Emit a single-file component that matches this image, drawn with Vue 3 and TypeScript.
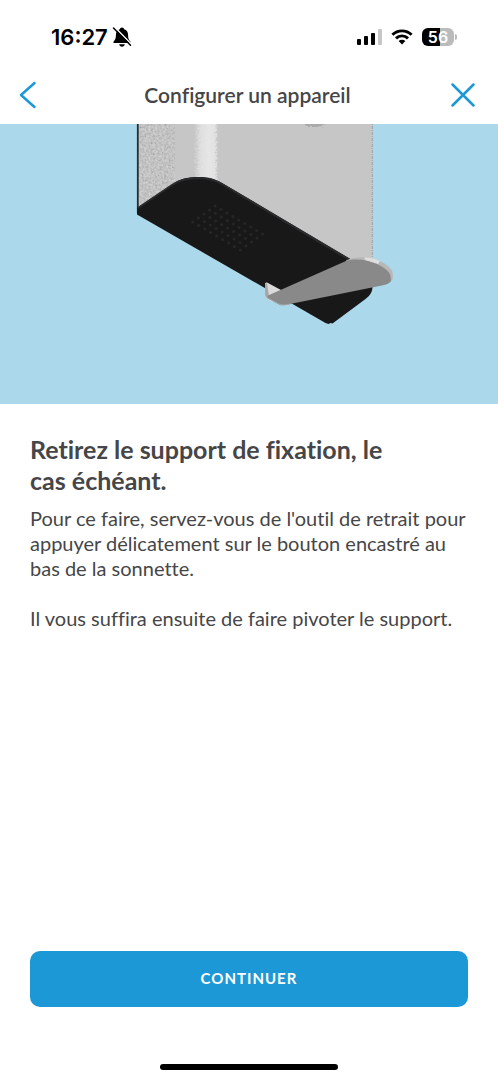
<script setup lang="ts">
interface Dot {
  x: number
  y: number
}

const title = 'Configurer un appareil'
const batteryLevel = 56

const speakerDots: Dot[] = []
for (let row = 0; row < 5; row++) {
  for (let col = 0; col < 9; col++) {
    speakerDots.push({ x: 215 + col * 5.95 - row * 5.55, y: 206 + col * 3.5 + row * 4 })
  }
}
</script>

<template>
  <div class="screen">
    <div class="status">
      <div class="clock">
        <span>16:27</span>
        <svg width="20" height="22" viewBox="0 0 20 22" aria-hidden="true">
          <path d="M10 1.500c1.200 0 2 .8 2.100 1.800 2.600.8 4 2.800 4 5.700 0 3.800.8 4.800 2.100 6.200.8.9.5 1.900-.7 1.900h-15c-1.200 0-1.500-1-.7-1.900C3.100 13.800 3.900 12.800 3.900 9c0-2.900 1.400-4.900 4-5.700C8 2.300 8.800 1.500 10 1.500z" />
          <path d="M7.200 18.300h5.600c-.2 1.500-1.300 2.400-2.800 2.400s-2.600-.9-2.800-2.400z" />
          <path d="M2.800 1.200 19.500 18.200" stroke="#fff" stroke-width="1.500" />
          <path d="M1.500 2 18.500 19.300" stroke="#000" stroke-width="1.500" stroke-linecap="round" />
        </svg>
      </div>
      <div class="indicators">
        <svg width="25" height="18" viewBox="0 0 25 18" aria-hidden="true">
          <rect x="0" y="11" width="4" height="6" rx="1" />
          <rect x="7" y="8" width="4" height="9" rx="1" />
          <rect x="14" y="5" width="4" height="12" rx="1" />
          <rect x="21" y="1" width="4" height="16" rx="1" fill="#c6c6c6" />
        </svg>
        <svg width="22" height="18" viewBox="0 0 22 18" aria-hidden="true">
          <g fill="none" stroke="#000" stroke-width="2.900">
            <path d="M1.400 6.800a13.600 13.600 0 0 1 19.200 0" />
            <path d="M5 10.400a8.500 8.500 0 0 1 12 0" />
          </g>
          <path d="M7.600 13a4.900 4.900 0 0 1 6.800 0L11 16.500z" />
        </svg>
        <div class="battery">
          <span class="cell">{{ batteryLevel }}</span>
          <span class="nub"></span>
        </div>
      </div>
    </div>

    <header class="bar">
      <button type="button" class="icon" aria-label="Retour">
        <svg width="18" height="28" viewBox="0 0 18 28"><path d="M15.500 2 2 14l13.500 12" /></svg>
      </button>
      <h1>{{ title }}</h1>
      <button type="button" class="icon" aria-label="Fermer">
        <svg width="26" height="26" viewBox="0 0 26 26"><path d="M2.500 2.500l21 21M23.500 2.500l-21 21" /></svg>
      </button>
    </header>

    <div class="hero">
      <svg viewBox="0 124 498 280" role="img" aria-label="Sonnette et support de fixation">
        <defs>
          <filter id="grain" x="0" y="0" width="100%" height="100%">
            <feTurbulence type="fractalNoise" baseFrequency="0.45" numOctaves="3" seed="4" />
            <feColorMatrix type="matrix" values="1.200 0 0 0 -.05  1.200 0 0 0 -.05  1.200 0 0 0 -.05  0 0 0 0 .3" />
            <feComposite in2="SourceGraphic" operator="in" />
          </filter>
          <filter id="rough" x="-20%" y="-5%" width="140%" height="110%">
            <feTurbulence type="fractalNoise" baseFrequency="0.5" numOctaves="2" seed="7" />
            <feDisplacementMap in="SourceGraphic" scale="7" xChannelSelector="R" yChannelSelector="G" />
          </filter>
          <linearGradient id="shine">
            <stop offset="0" stop-color="#dedede" stop-opacity="0" />
            <stop offset=".25" stop-color="#dedede" />
            <stop offset=".6" stop-color="#e6e6e6" />
            <stop offset=".88" stop-color="#e2e2e2" />
            <stop offset="1" stop-color="#dedede" stop-opacity="0" />
          </linearGradient>
        </defs>
        <path d="M137 120H372.500V290L330 310 137 212z" fill="#c6c6c6" />
        <path d="M138 120h37v64l-37 26z" fill="#c2c2c2" />
        <path d="M138 120h37v64l-37 26z" filter="url(#grain)" />
        <path d="M194 112h24v78h-24z" fill="url(#shine)" filter="url(#rough)" />
        <path d="M303 122h24q-3 5-13 5t-11-5z" fill="#a9a9a9" filter="url(#rough)" />
        <path d="M372.300 120V262" stroke="#a0a0a0" stroke-width="1" stroke-dasharray="3 1 1 1" />
        <path d="M137.800 120v93" stroke="#292c2f" stroke-width="1.800" />
        <path d="M137 208l35-23.500C181 178 189 177 199 177c10 0 16 2 23 6L372.500 272v14c0 6-2 9-7 13l-33 24.500-2-.5-2 1-3-1L137 214.500z" fill="#181818" />
        <path d="M138 208l34-23C181 179 189 178 199 178c10 0 16 2 23 6L349 259.500" fill="none" stroke="#292b2d" stroke-width="2" />
        <g fill="#262626">
          <circle v-for="(dot, i) in speakerDots" :key="i" :cx="dot.x" :cy="dot.y" r="1.600" />
        </g>
        <path d="M265 284q0-2 2-1.500l14 7.500v6l-9 6-6-4q-1-1-1-3z" fill="#dadada" />
        <path d="M265 284v11q0 2 2 3l2-2-2-13z" fill="#a8a8a8" />
        <path d="M346 260.500q8-4 23-3 17 4 23 13 1.500 4 .5 9l-3 3-42-15z" fill="#b7b7b7" />
        <path d="M364 257.500q9-.5 16 3.500l-2 3-12-3z" fill="#dedede" />
        <path d="M268 295.500 346 261c10-3 22-1 31 3 8 4 13 8 13.500 12l.5 5q-2 3-9 4.500L290 304q-5 1.500-10 1l-13-7z" fill="#898989" />
        <path d="M267 297.500 280 304.500q5 1 10-.5" fill="none" stroke="#a2a2a2" stroke-width="1" />
      </svg>
    </div>

    <main>
      <h2>Retirez le support de fixation, le<br />cas échéant.</h2>
      <p>Pour ce faire, servez-vous de l'outil de retrait pour<br />appuyer délicatement sur le bouton encastré au<br />bas de la sonnette.</p>
      <p>Il vous suffira ensuite de faire pivoter le support.</p>
    </main>

    <footer>
      <button type="button" class="primary">CONTINUER</button>
      <div class="home"></div>
    </footer>
  </div>
</template>

<style>
body {
  margin: 0;
  background: #fff;
}
</style>

<style scoped>
.screen {
  min-height: 100vh;
  display: flex;
  flex-direction: column;
  background: #fff;
  color: #464648;
  font-family: Lato, "Noto Sans", sans-serif;
  font-variant-ligatures: no-common-ligatures;
}
.status {
  display: flex;
  justify-content: space-between;
  align-items: center;
  height: 74px;
  padding: 0 41px 0 51px;
  box-sizing: border-box;
  color: #000;
  font-family: Inter, sans-serif;
}
.clock {
  display: flex;
  align-items: center;
  gap: 4px;
  font-size: 22px;
  font-weight: 600;
}
.indicators {
  display: flex;
  align-items: center;
  gap: 9px;
}
.battery {
  display: flex;
  align-items: center;
  gap: 1px;
}
.cell {
  width: 32px;
  height: 18px;
  border-radius: 6px;
  background: linear-gradient(90deg, #000 56%, #bbb 56%);
  color: #fff;
  font-size: 16px;
  line-height: 18px;
  font-weight: 600;
  text-align: center;
}
.nub {
  width: 2px;
  height: 6px;
  border-radius: 0 2px 2px 0;
  background: #bbb;
}
.bar {
  display: grid;
  grid-template-columns: 1fr auto 1fr;
  align-items: center;
  height: 50px;
  padding: 0 22px 8px 19px;
  box-sizing: border-box;
}
.icon {
  display: flex;
  justify-self: start;
  padding: 0;
  border: 0;
  background: none;
}
.icon:last-child {
  justify-self: end;
}
.icon path {
  fill: none;
  stroke: #1c98d7;
  stroke-width: 2.500;
  stroke-linecap: round;
  stroke-linejoin: round;
}
h1 {
  margin: 0;
  font-size: 21px;
  line-height: 28px;
  font-weight: 600;
}
.hero {
  background: #abd8eb;
}
.hero svg {
  display: block;
  width: 100%;
}
main {
  flex: 1;
  padding: 30px;
}
h2 {
  margin: 0 0 10px;
  font-size: 25px;
  line-height: 31px;
  font-weight: 700;
}
p {
  margin: 0 0 25px;
  font-size: 20px;
  line-height: 25px;
}
footer {
  padding: 0 30px 10px;
}
.primary {
  display: block;
  width: 100%;
  height: 56px;
  padding: 0 0 2px;
  border: 0;
  border-radius: 10px;
  background: #1c98d7;
  color: #fff;
  font: 700 15px Lato, sans-serif;
  letter-spacing: 1px;
}
.home {
  width: 178px;
  height: 6px;
  margin: 57px auto 0;
  border-radius: 3px;
  background: #000;
}
</style>
